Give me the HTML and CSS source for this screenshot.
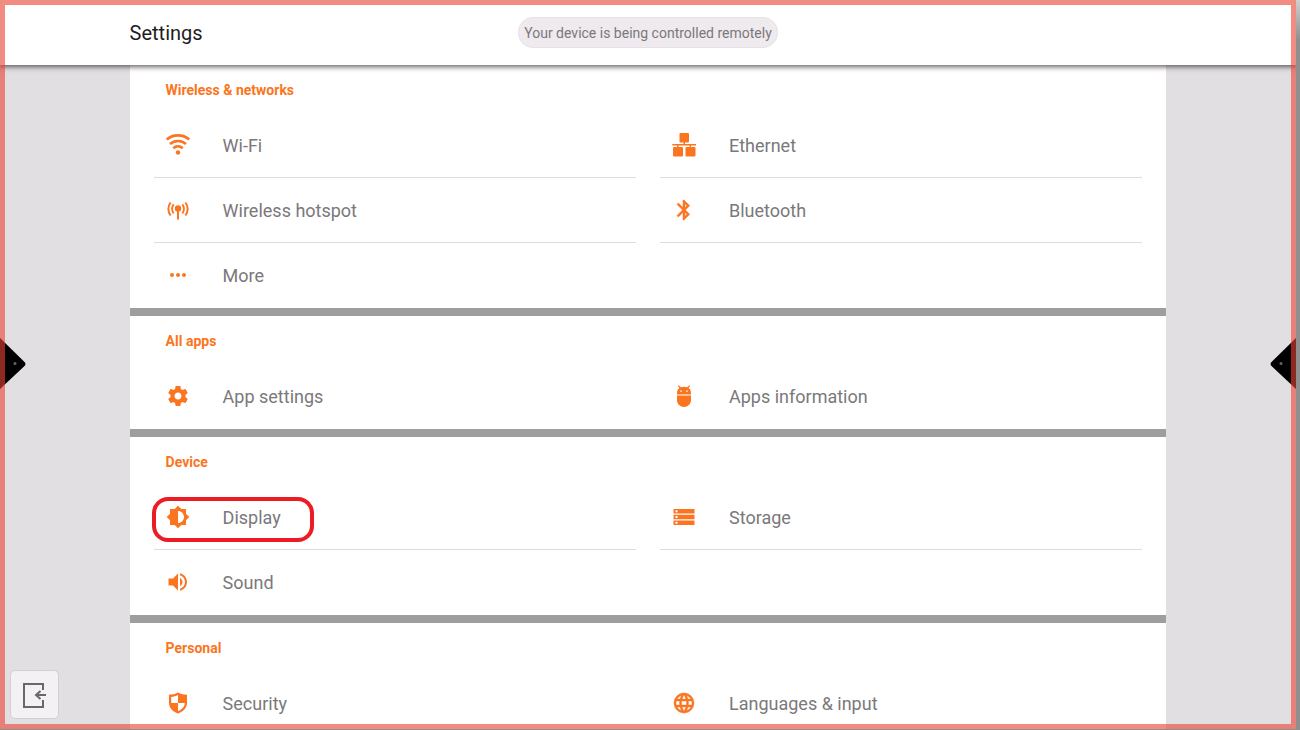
FILE: index.html
```html
<!DOCTYPE html>
<html lang="en">
<head>
    <meta charset="UTF-8">
    <title>Settings</title>
    <link rel="stylesheet" href="styles.css">
</head>
<body>
    <div class="screen">
        <header>
            <h1>Settings</h1>
            <p class="notice">Your device is being controlled remotely</p>
        </header>
        <main>
            <div class="settings">
                <section>
                    <h2>Wireless &amp; networks</h2>
                    <ul>
                        <li><a href="#wifi">
                            <svg viewBox="0 0 24 24"><g fill="none" stroke="currentColor" stroke-width="2.600"><path d="M.8 6.600C7 1 17 1 23.200 6.600"/><path d="M4 11c4.400-4 11.600-4 16 0"/><path d="M7.300 15.200c2.700-2.500 6.700-2.500 9.400 0"/></g><circle cx="12" cy="19.500" r="2.200"/></svg>
                            Wi-Fi</a></li>
                        <li><a href="#ethernet">
                            <svg viewBox="0 0 24 24"><rect x="7.500" y="0" width="9.500" height="9.500" rx="1"/><rect x="1" y="14" width="10" height="9.500" rx="1"/><rect x="13.500" y="14" width="10" height="9.500" rx="1"/><path d="M.3 11h11.200V9h1.500v2h11v1.400h-5V14h-1.400v-1.600H6.500V14H5v-1.600H.3z"/></svg>
                            Ethernet</a></li>
                        <li><a href="#hotspot">
                            <svg viewBox="0 0 24 24"><circle cx="12" cy="10.500" r="3.200"/><path d="M11 11h2v10.500h-2z"/><g fill="none" stroke="currentColor" stroke-width="2"><path d="M7.600 6.300c-2 2.600-2 6.400 0 9M4.600 4.500c-3 3.800-3 9.200 0 13M16.400 6.300c2 2.600 2 6.400 0 9M19.400 4.500c3 3.800 3 9.200 0 13"/></g></svg>
                            Wireless hotspot</a></li>
                        <li><a href="#bluetooth">
                            <svg viewBox="0 0 24 24" stroke="currentColor" stroke-width=".5"><path d="M17.710 7.710L12 2h-1v7.590L6.410 5 5 6.410 10.590 12 5 17.590 6.410 19 11 14.410V22h1l5.710-5.710-4.300-4.290 4.300-4.290zM13 5.830l1.880 1.880L13 9.590V5.830zm1.880 10.460L13 18.170v-3.760l1.880 1.880z"/></svg>
                            Bluetooth</a></li>
                        <li><a href="#more">
                            <svg viewBox="0 0 24 24"><circle cx="6" cy="12" r="2"/><circle cx="12" cy="12" r="2"/><circle cx="18" cy="12" r="2"/></svg>
                            More</a></li>
                    </ul>
                </section>
                <section>
                    <h2>All apps</h2>
                    <ul>
                        <li><a href="#app-settings">
                            <svg viewBox="0 0 24 24"><path d="M19.430 12.980c.04-.32.07-.64.07-.98s-.03-.66-.07-.98l2.110-1.650c.19-.15.24-.42.12-.64l-2-3.460c-.12-.22-.39-.3-.61-.22l-2.490 1c-.52-.4-1.080-.73-1.690-.98l-.38-2.650C14.460 2.180 14.250 2 14 2h-4c-.25 0-.46.18-.49.42l-.38 2.650c-.61.25-1.170.59-1.690.98l-2.490-1c-.23-.09-.49 0-.61.22l-2 3.460c-.13.22-.07.49.12.64l2.110 1.650c-.04.32-.07.65-.07.98s.03.66.07.98l-2.110 1.650c-.19.15-.24.42-.12.64l2 3.460c.12.22.39.3.61.22l2.490-1c.52.4 1.080.73 1.690.98l.38 2.650c.03.24.24.42.49.42h4c.25 0 .46-.18.49-.42l.38-2.650c.61-.25 1.170-.59 1.690-.98l2.490 1c.23.09.49 0 .61-.22l2-3.460c.12-.22.07-.49-.12-.64l-2.110-1.650zM12 15.500c-1.930 0-3.500-1.570-3.500-3.500s1.570-3.500 3.500-3.500 3.500 1.570 3.500 3.500-1.570 3.500-3.500 3.500z"/></svg>
                            App settings</a></li>
                        <li><a href="#apps-information">
                            <svg viewBox="0 0 24 24"><path d="M5 16c0 3.870 3.130 7 7 7s7-3.130 7-7v-4.500H5V16zM16.500 3.800l1.600-1.600-.9-.9-2 2C14.160 3 13.120 2.800 12 2.800s-2.160.2-3.200.5l-2-2-.9.9 1.600 1.600C6 5 5 7 5 9v1.500h14V9c0-2-1-4-2.500-5.200zM9 8c-.5 0-.8-.4-.8-.9s.3-.9.800-.9.8.4.8.9-.3.9-.8.9zm6 0c-.5 0-.8-.4-.8-.9s.3-.9.800-.9.8.4.8.9-.3.9-.8.9z"/></svg>
                            Apps information</a></li>
                    </ul>
                </section>
                <section>
                    <h2>Device</h2>
                    <ul>
                        <li class="marked"><a href="#display">
                            <svg viewBox="0 0 24 24"><path d="M20 15.310L23.310 12 20 8.690V4h-4.690L12 .69 8.690 4H4v4.690L.69 12 4 15.310V20h4.690L12 23.310 15.310 20H20v-4.690zM12 18V6c3.310 0 6 2.690 6 6s-2.690 6-6 6z"/></svg>
                            Display</a></li>
                        <li><a href="#storage">
                            <svg viewBox="0 0 24 24"><path d="M1.500 20h21v-4.500h-21V20zm2-3.200h2v2h-2v-2zM1.500 4v4.500h21V4h-21zm4 3.200h-2v-2h2v2zm-4 7.050h21v-4.500h-21v4.500zm2-3.250h2v2h-2v-2z"/></svg>
                            Storage</a></li>
                        <li><a href="#sound">
                            <svg viewBox="0 0 24 24"><path d="M2.500 8.500v7H7l5 5v-17l-5 5H2.500zm14 3.500c0-1.770-1.020-3.290-2.500-4.030v8.050c1.480-.73 2.500-2.250 2.500-4.020zM14 3.230v2.060c2.890.86 5 3.540 5 6.710s-2.110 5.850-5 6.710v2.060c4.010-.91 7-4.490 7-8.770s-2.990-7.860-7-8.770z"/></svg>
                            Sound</a></li>
                    </ul>
                </section>
                <section>
                    <h2>Personal</h2>
                    <ul>
                        <li><a href="#security">
                            <svg viewBox="0 0 24 24"><path fill-rule="evenodd" d="M12 1.500c-2.700 1.600-5.700 2.200-9 2.200V12c0 5 3.800 8.800 9 10.500 5.200-1.700 9-5.500 9-10.500V3.700c-3.300 0-6.300-.6-9-2.200zM12 4v8h6.800c0 3.800-2.800 6.500-6.800 8v-8H5.200V6c2.500-.2 4.800-.8 6.800-2z"/></svg>
                            Security</a></li>
                        <li><a href="#languages">
                            <svg viewBox="0 0 24 24" stroke="currentColor" stroke-width=".4"><path d="M11.990 2C6.470 2 2 6.480 2 12s4.470 10 9.990 10C17.520 22 22 17.520 22 12S17.520 2 11.990 2zm6.930 6h-2.950c-.32-1.250-.78-2.450-1.380-3.560 1.840.63 3.370 1.910 4.330 3.560zM12 4.040c.83 1.200 1.480 2.530 1.910 3.960h-3.820c.43-1.430 1.080-2.760 1.910-3.960zM4.260 14C4.100 13.360 4 12.690 4 12s.1-1.360.26-2h3.380c-.08.66-.14 1.320-.14 2s.06 1.340.14 2H4.260zm.82 2h2.950c.32 1.250.78 2.450 1.380 3.560-1.840-.63-3.370-1.900-4.330-3.560zm2.950-8H5.080c.96-1.660 2.490-2.930 4.330-3.560C8.810 5.550 8.350 6.750 8.030 8zM12 19.960c-.83-1.200-1.480-2.530-1.910-3.960h3.820c-.43 1.430-1.080 2.760-1.910 3.960zM14.340 14H9.660c-.09-.66-.16-1.320-.16-2s.07-1.350.16-2h4.680c.09.65.16 1.320.16 2s-.07 1.340-.16 2zm.25 5.560c.6-1.110 1.060-2.310 1.380-3.560h2.950c-.96 1.650-2.490 2.930-4.330 3.560zM16.360 14c.08-.66.14-1.320.14-2s-.06-1.340-.14-2h3.380c.16.640.26 1.310.26 2s-.1 1.360-.26 2h-3.380z"/></svg>
                            Languages &amp; input</a></li>
                    </ul>
                </section>
            </div>
        </main>
        <button class="side left" aria-label="Open left toolbar">
            <svg viewBox="0 0 26 52"><path d="M0 0l24 23.500q3 2.500 0 5L0 51z"/><circle cx="15" cy="25.500" r="1.500" fill="#666"/></svg>
        </button>
        <button class="side right" aria-label="Open right toolbar">
            <svg viewBox="0 0 26 52"><path d="M26 0L2 23.500q-3 2.500 0 5L26 51z"/><circle cx="11" cy="25.500" r="1.500" fill="#666"/></svg>
        </button>
        <button class="exit" aria-label="Exit">
            <svg viewBox="0 0 26 26" fill="none" stroke="currentColor" stroke-width="2"><path d="M21 8V2H2v23h19v-7"/><path d="M24 13H14M18.500 9L14 13l4.500 4"/></svg>
        </button>
    </div>
</body>
</html>
```
FILE: styles.css
```css
*, *::after {
    box-sizing: border-box;
}
body {
    margin: 0;
    height: 100vh;
    padding: 0 4px 1px 0;
    background: linear-gradient(#d0d0d0, #8f8f8f 40px);
    font-family: Roboto, "Liberation Sans", sans-serif;
    color: #7b787b;
}
.screen {
    position: relative;
    display: flex;
    flex-direction: column;
    height: 100%;
    overflow: hidden;
    background: #e2dfe2;
}
/* red frame over the whole screen while it is controlled remotely */
.screen::after {
    content: "";
    position: absolute;
    inset: 0;
    border: 5px solid rgba(234, 67, 53, 0.61);
    pointer-events: none;
    z-index: 2;
}
header {
    display: grid;
    grid-template-columns: 1fr auto 1fr;
    align-items: center;
    flex: none;
    height: 65px;
    padding: 0 10%;
    background: #fff;
    box-shadow: 0 1px 5px 1px rgba(40, 30, 40, 0.7);
    z-index: 1;
}
h1 {
    margin: 0;
    font-size: 20px;
    font-weight: 400;
    color: #1f1c1f;
}
.notice {
    margin: 0;
    padding: 1px 5px 0;
    border: 1px solid #e6e1e6;
    border-radius: 15px;
    background: #eeeaee;
    font-size: 14px;
    line-height: 28px;
}
main {
    flex: 1;
    min-height: 0;
    overflow: hidden;
}
.settings {
    display: flex;
    flex-direction: column;
    gap: 8px;
    width: 80%;
    margin: 0 auto;
    background: #9e9e9e;
}
section {
    padding: 0 24px 1px;
    background: #fff;
}
h2 {
    margin: 0;
    height: 48px;
    padding-left: 12px;
    font-size: 14px;
    font-weight: 700;
    line-height: 50px;
    color: #fb7521;
}
ul {
    display: grid;
    grid-template-columns: 1fr 1fr;
    column-gap: 24px;
    margin: 0;
    padding: 0;
    list-style: none;
}
li {
    position: relative;
    border-bottom: 1px solid #dfdadf;
}
/* no line under the last row */
li:nth-child(odd):nth-last-child(-n+2),
li:nth-child(odd):nth-last-child(-n+2) ~ li {
    border-bottom: none;
}
li a {
    display: flex;
    align-items: center;
    gap: 33px;
    height: 64px;
    padding-left: 12px;
    font-size: 18px;
    color: inherit;
    text-decoration: none;
}
li svg {
    width: 24px;
    height: 24px;
    fill: currentColor;
    color: #fb7521;
}
.marked::after {
    content: "";
    position: absolute;
    top: 12px;
    left: -2px;
    width: 162px;
    height: 45px;
    border: 4px solid #ed1c24;
    border-radius: 16px;
    pointer-events: none;
}
button {
    padding: 0;
    border: none;
    background: none;
}
.side {
    position: absolute;
    top: 338px;
    width: 26px;
    height: 52px;
}
.side svg {
    display: block;
}
.left {
    left: 0;
}
.right {
    right: 0;
}
.exit {
    position: absolute;
    left: 10px;
    bottom: 10px;
    display: flex;
    align-items: center;
    justify-content: center;
    width: 49px;
    height: 49px;
    border: 1px solid #d2ced2;
    border-radius: 5px;
    background: #f3f1f3;
    color: #6a676a;
}
.exit svg {
    width: 26px;
    height: 26px;
}
```
